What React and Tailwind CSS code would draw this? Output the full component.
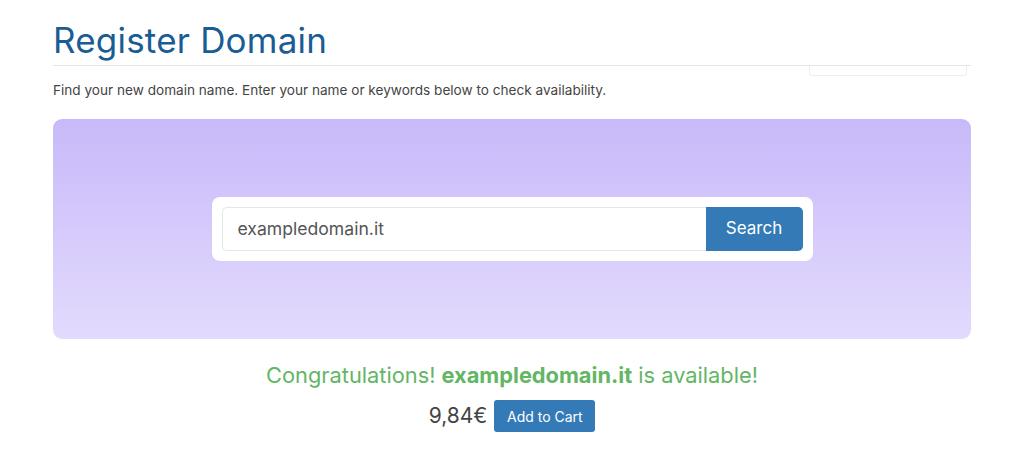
export default function App() {
  return (
    <div className="w-[1024px] h-[453px] bg-white overflow-hidden" style={{ fontFamily: "Inter, 'Noto Sans', sans-serif" }}>
      <div className="mx-[53px] w-[918px]">
        <h1 className="pt-[18px] text-[35px] leading-[44px] text-[#1a5c94] font-normal tracking-[0.2px]">Register Domain</h1>
        <div className="mt-[3px] h-px bg-[#e4e4ec]"></div>
        <div className="flex justify-end pr-[4px]">
          <div className="w-[158px] h-[10px] border-x border-b border-[#eeeef2] rounded-b-[3px]"></div>
        </div>
        <p className="mt-[5px] text-[13.6px] leading-[18px] text-[#444]">Find your new domain name. Enter your name or keywords below to check availability.</p>
        <div className="mt-[20px] h-[220px] rounded-[9px] bg-gradient-to-b from-[#c8b9f9] to-[#e3dbfd] flex items-center justify-center">
          <div className="w-[601px] h-[64px] bg-white rounded-[8px] p-[10px] flex">
            <div className="flex-1 border border-[#e6e6e6] border-r-0 rounded-l-[5px] flex items-center pl-[15px] text-[17.6px] text-[#555]">exampledomain.it</div>
            <div className="w-[97px] bg-[#337ab7] rounded-r-[5px] flex items-center justify-center text-white text-[17px]">Search</div>
          </div>
        </div>
        <div className="mt-[21px] text-center text-[21.8px] leading-[30px] text-[#62b664]">
          Congratulations! <span className="font-bold">exampledomain.it</span> is available!
        </div>
        <div className="mt-[10px] flex items-center justify-center gap-[7px]">
          <span className="text-[21px] text-[#444]">9,84€</span>
          <span className="h-[32px] w-[101px] bg-[#337ab7] rounded-[3px] flex items-center justify-center text-white text-[14px]">Add to Cart</span>
        </div>
      </div>
    </div>
  );
}
